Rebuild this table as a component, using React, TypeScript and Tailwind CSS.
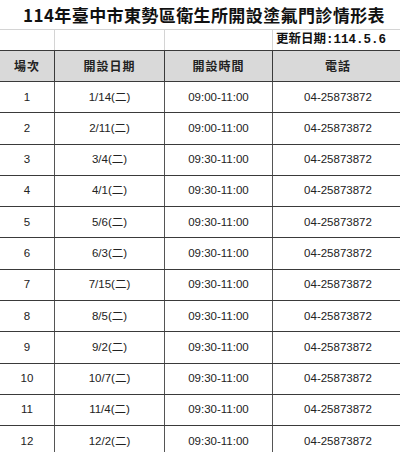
const rows = [
  ["1", "1/14(二)", "09:00-11:00"],
  ["2", "2/11(二)", "09:00-11:00"],
  ["3", "3/4(二)", "09:30-11:00"],
  ["4", "4/1(二)", "09:30-11:00"],
  ["5", "5/6(二)", "09:30-11:00"],
  ["6", "6/3(二)", "09:30-11:00"],
  ["7", "7/15(二)", "09:30-11:00"],
  ["8", "8/5(二)", "09:30-11:00"],
  ["9", "9/2(二)", "09:30-11:00"],
  ["10", "10/7(二)", "09:30-11:00"],
  ["11", "11/4(二)", "09:30-11:00"],
  ["12", "12/2(二)", "09:30-11:00"],
]

const cols = "grid grid-cols-[55px_110px_108px_130px]"
const cjk = "font-['Noto_Sans_CJK_TC',sans-serif]"

export default function App() {
  return (
    <div className="w-[400px] h-[452px] overflow-hidden bg-white">
      <div className="w-[404px]">
        <div className="h-[30px] flex items-center justify-center border-b border-[#d4d4d4]">
          <h1 className={`${cjk} text-[17px] font-bold text-[#111] tracking-[0.4px] leading-none pl-[4px]`}>
            114年臺中市東勢區衛生所開設塗氟門診情形表
          </h1>
        </div>

        <div className={`${cols} h-[20px]`}>
          <div className="border-r border-[#d4d4d4]" />
          <div className="border-r border-[#d4d4d4]" />
          <div className="border-r border-[#d4d4d4]" />
          <div className="flex items-center justify-end pr-[17px] font-['Liberation_Mono','Noto_Sans_CJK_TC',monospace] text-[12.5px] font-bold text-[#111]">
            更新日期:114.5.6
          </div>
        </div>

        <div className={`${cols} h-[32px] bg-[#d9d9d9] border-y border-[#3a3a3a] ${cjk} text-[12px] font-bold text-[#222] tracking-[1px]`}>
          <div className="flex items-center justify-center border-r border-[#3a3a3a]">場次</div>
          <div className="flex items-center justify-center border-r border-[#3a3a3a]">開設日期</div>
          <div className="flex items-center justify-center border-r border-[#3a3a3a]">開設時間</div>
          <div className="flex items-center justify-center">電話</div>
        </div>

        {rows.map((r) => (
          <div
            key={r[0]}
            className={`${cols} h-[31.3px] border-b border-[#3a3a3a] font-['Liberation_Sans','Noto_Sans_CJK_TC',sans-serif] text-[11.5px] text-[#222]`}
          >
            <div className="flex items-center justify-center border-r border-[#555]">{r[0]}</div>
            <div className="flex items-center justify-center border-r border-[#555]">{r[1]}</div>
            <div className="flex items-center justify-center border-r border-[#555]">{r[2]}</div>
            <div className="flex items-center justify-center">04-25873872</div>
          </div>
        ))}
      </div>
    </div>
  )
}
